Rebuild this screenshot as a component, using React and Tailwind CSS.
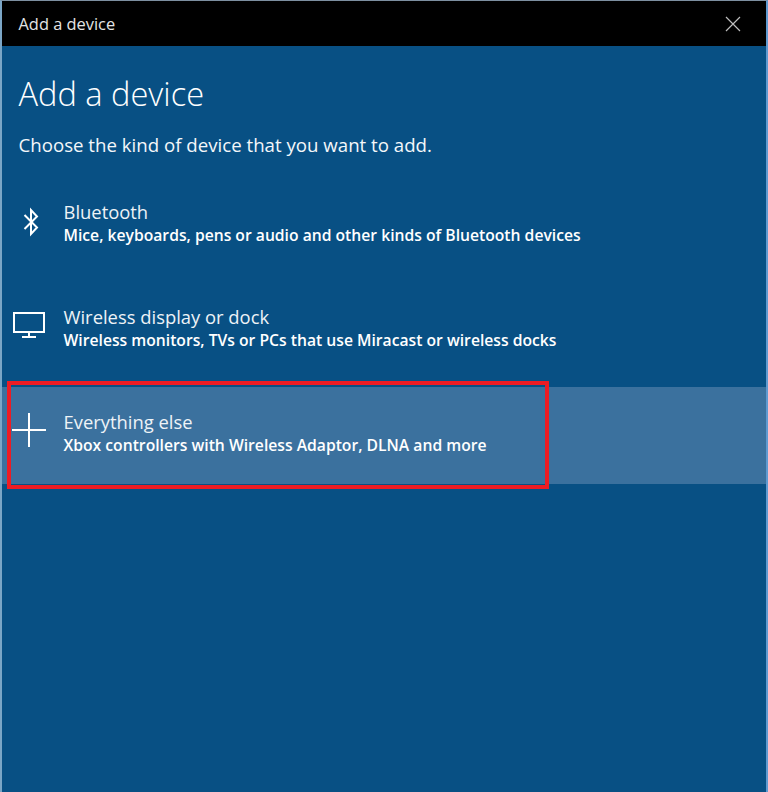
const Row = ({ icon, title, sub, selected }) => (
  <div className={`flex h-[97px] pt-[23px] ${selected ? "bg-[#3b719e]" : ""}`}>
    <div className="w-[61.5px] shrink-0 flex justify-center">{icon}</div>
    <div>
      <div className="text-[18.4px] leading-[24px] text-[#eef3f7] font-normal">{title}</div>
      <div className="text-[15.7px] leading-[23px] text-white font-semibold">{sub}</div>
    </div>
  </div>
);

export default function App() {
  return (
    <div className="relative w-[768px] h-[792px] overflow-hidden bg-[#085084] border-l-2 border-r-2 border-t border-l-[#7ba6c6] border-r-[#5f9ad0] border-t-[#7d8fa0] font-['Open_Sans',sans-serif]">
      <div className="h-[45px] bg-black flex items-center justify-between pl-[16.5px] pr-[26px]">
        <span className="text-[16.4px] text-[#e4e4e4] pt-[2px]">Add a device</span>
        <svg width="16" height="16" viewBox="0 0 16 16" stroke="#bdbdbd" strokeWidth="1.2" fill="none" className="mr-[-1px]">
          <path d="M1 1L15 15M15 1L1 15" />
        </svg>
      </div>
      <h1 className="pl-[16.5px] mt-[26px] text-[32.6px] leading-[44px] font-light text-white">Add a device</h1>
      <p className="pl-[16.5px] mt-[17px] text-[18.67px] leading-[24px] font-normal text-[#f4f7fa]">
        Choose the kind of device that you want to add.
      </p>
      <div className="mt-[20px]">
        <div className="h-[105px]">
          <Row
            title="Bluetooth"
            sub="Mice, keyboards, pens or audio and other kinds of Bluetooth devices"
            icon={
              <svg width="16" height="30" viewBox="0 0 16 30" stroke="white" strokeWidth="2" fill="none" className="mt-[7px] ml-[-4px]">
                <path d="M1.5 8L14 20.5L8 27V3L14 9.5L1.5 22" />
              </svg>
            }
          />
        </div>
        <div className="h-[105px]">
          <Row
            title="Wireless display or dock"
            sub="Wireless monitors, TVs or PCs that use Miracast or wireless docks"
            icon={
              <svg width="32" height="26" viewBox="0 0 32 26" stroke="white" strokeWidth="2" fill="none" className="mt-[7px] ml-[-8px]">
                <path d="M1 1H31V20H1Z" />
                <path d="M16 20V25M9 25H23" />
              </svg>
            }
          />
        </div>
        <Row
          selected
          title="Everything else"
          sub="Xbox controllers with Wireless Adaptor, DLNA and more"
          icon={
            <svg width="34" height="34" viewBox="0 0 34 34" stroke="white" strokeWidth="2" fill="none" className="mt-[3px] ml-[-7px]">
              <path d="M17 0V34M0 17H34" />
            </svg>
          }
        />
      </div>
      <div className="absolute left-[5px] top-[380px] w-[542px] h-[108px] border-4 border-[#ed1c24]" />
    </div>
  );
}
